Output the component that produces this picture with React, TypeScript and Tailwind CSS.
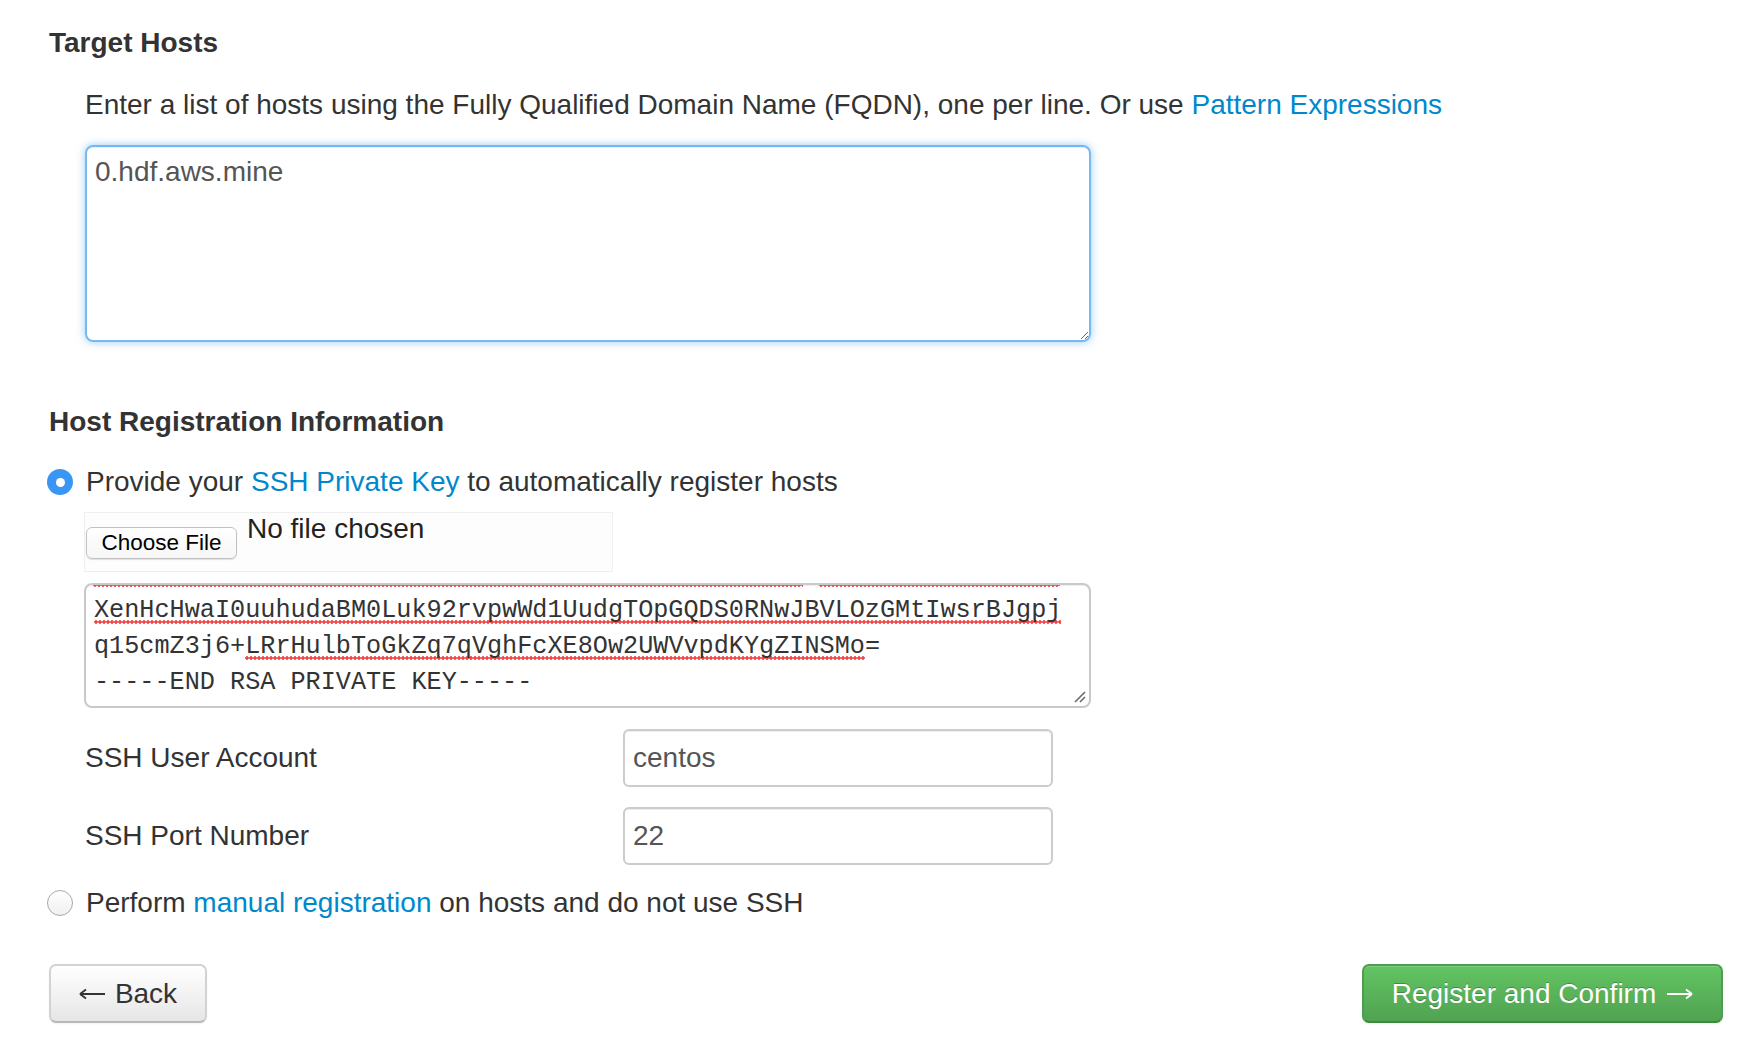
import React from "react"

const KEY_LINES = {
  first: "XenHcHwaI0uuhudaBM0Luk92rvpwWd1UudgTOpGQDS0RNwJBVLOzGMtIwsrBJgpj",
  second: { head: "q15cmZ3j6+", word: "LRrHulbToGkZq7qVghFcXE8Ow2UWVvpdKYgZINSMo", tail: "=" },
  last: "-----END RSA PRIVATE KEY-----",
}

// chrome-ish spell check dots
const misspelt =
  "bg-[radial-gradient(circle,#ee4a4a_1.5px,transparent_2px)] bg-[length:4px_4px] bg-repeat-x bg-[position:0_calc(100%-1px)]"

function Radio({ checked }: { checked?: boolean }) {
  if (checked) {
    return (
      <span className="-ml-[2px] flex h-[26px] w-[26px] shrink-0 items-center justify-center rounded-full bg-[#3a96f5]">
        <span className="h-[9px] w-[9px] rounded-full bg-white" />
      </span>
    )
  }
  return (
    <span className="-ml-[2px] h-[26px] w-[26px] shrink-0 rounded-full border border-[#a9a9a9] bg-gradient-to-b from-white to-[#f0f0f0] shadow-[inset_0_1px_0_rgba(255,255,255,0.8)]" />
  )
}

function Arrow({ dir }: { dir: "left" | "right" }) {
  return (
    <svg width="27" height="12" viewBox="0 0 27 12" className={dir === "right" ? "rotate-180" : ""}>
      <path d="M1 6H26M1 6L7 1.5M1 6L7 10.5" stroke="currentColor" strokeWidth="1.8" fill="none" />
    </svg>
  )
}

function ResizeGrip() {
  return (
    <svg className="absolute bottom-[3px] right-[3px]" width="14" height="14" viewBox="0 0 14 14">
      <path d="M13 3L3 13M13 8L8 13" stroke="#6b6b6b" strokeWidth="1.6" />
    </svg>
  )
}

export default function App() {
  return (
    <div className="min-h-screen bg-white pl-[49px] pr-[15px] pt-[23px] font-['Liberation_Sans',Arial,sans-serif] text-[28px] leading-[40px] text-[#333]">
      {/* Target hosts */}
      <h4 className="font-bold">Target Hosts</h4>
      <div className="pl-[36px]">
        <p className="mt-[22px] whitespace-nowrap">
          Enter a list of hosts using the Fully Qualified Domain Name (FQDN), one per line. Or use{" "}
          <a className="text-[#0088cc]">Pattern Expressions</a>
        </p>
        <textarea
          spellCheck={false}
          defaultValue="0.hdf.aws.mine"
          className="mt-[20px] block h-[197px] w-[1006px] rounded-[8px] border-2 border-[rgba(82,168,236,0.8)] px-[8px] pt-[5px] text-[28px] leading-[40px] text-[#555] shadow-[inset_0_1px_1px_rgba(0,0,0,0.075),0_0_8px_rgba(82,168,236,0.6)] outline-none"
        />
      </div>

      {/* Host registration */}
      <h4 className="mt-[60px] font-bold">Host Registration Information</h4>

      <div className="mt-[20px] flex items-center gap-[13px]">
        <Radio checked />
        <span>
          Provide your <a className="text-[#0088cc]">SSH Private Key</a> to automatically register hosts
        </span>
      </div>

      <div className="ml-[35px] mt-[10px] flex h-[60px] w-[529px] items-start border border-[#efefef] bg-[#fdfdfd]">
        <button className="ml-[1px] mt-[14px] h-[32px] w-[151px] rounded-[6px] border border-[#c2c2c2] bg-gradient-to-b from-white to-[#f6f6f6] text-[22.5px] leading-[30px] text-black shadow-[0_1px_1px_rgba(0,0,0,0.12)]">
          Choose File
        </button>
        <span className="ml-[10px] text-[28px] leading-[32px] text-[#222]">No file chosen</span>
      </div>

      <div className="relative ml-[35px] mt-[11px] h-[125px] w-[1007px] overflow-hidden rounded-[8px] border-2 border-[#c9c9c9] px-[8px] font-['Liberation_Mono','Courier_New',monospace] text-[25.2px] leading-[36px] text-[#333] shadow-[inset_0_1px_1px_rgba(0,0,0,0.075)]">
        {/* tail of the line scrolled out of view */}
        <div className="-ml-[1px] flex h-[3px] gap-[16px]">
          <div className={`w-[710px] ${misspelt} bg-[position:0_50%]`} />
          <div className={`w-[241px] ${misspelt} bg-[position:0_50%]`} />
        </div>
        <div className="mt-[5px] whitespace-pre">
          <div>
            <span className={misspelt}>{KEY_LINES.first}</span>
          </div>
          <div>
            {KEY_LINES.second.head}
            <span className={misspelt}>{KEY_LINES.second.word}</span>
            {KEY_LINES.second.tail}
          </div>
          <div>{KEY_LINES.last}</div>
        </div>
        <ResizeGrip />
      </div>

      <div className="pl-[36px]">
        <div className="mt-[21px] flex items-center">
          <span className="w-[538px]">SSH User Account</span>
          <input
            defaultValue="centos"
            className="h-[58px] w-[430px] rounded-[6px] border-2 border-[#cccccc] px-[8px] text-[28px] text-[#555] shadow-[inset_0_1px_1px_rgba(0,0,0,0.075)] outline-none"
          />
        </div>
        <div className="mt-[20px] flex items-center">
          <span className="w-[538px]">SSH Port Number</span>
          <input
            defaultValue="22"
            className="h-[58px] w-[430px] rounded-[6px] border-2 border-[#cccccc] px-[8px] text-[28px] text-[#555] shadow-[inset_0_1px_1px_rgba(0,0,0,0.075)] outline-none"
          />
        </div>
      </div>

      <div className="mt-[18px] flex items-center gap-[13px]">
        <Radio />
        <span>
          Perform <a className="text-[#0088cc]">manual registration</a> on hosts and do not use SSH
        </span>
      </div>

      {/* Actions */}
      <div className="mt-[41px] flex items-center justify-between">
        <button className="flex h-[59px] w-[158px] items-center justify-center gap-[9px] rounded-[7px] border-2 border-[#d2d2d2] border-b-[#b8b8b8] bg-gradient-to-b from-white to-[#e6e6e6] text-[28px] text-[#333] shadow-[inset_0_1px_0_rgba(255,255,255,0.2),0_1px_2px_rgba(0,0,0,0.05)]">
          <Arrow dir="left" />
          <span>Back</span>
        </button>
        <button className="flex h-[59px] w-[361px] items-center justify-center gap-[10px] rounded-[7px] border-2 border-[#4f9d4f] border-b-[#3f8a3f] bg-gradient-to-b from-[#62c462] to-[#51a351] text-[28px] text-white [text-shadow:0_-1px_0_rgba(0,0,0,0.25)] shadow-[inset_0_1px_0_rgba(255,255,255,0.2),0_1px_2px_rgba(0,0,0,0.05)]">
          <span>Register and Confirm</span>
          <Arrow dir="right" />
        </button>
      </div>
    </div>
  )
}
